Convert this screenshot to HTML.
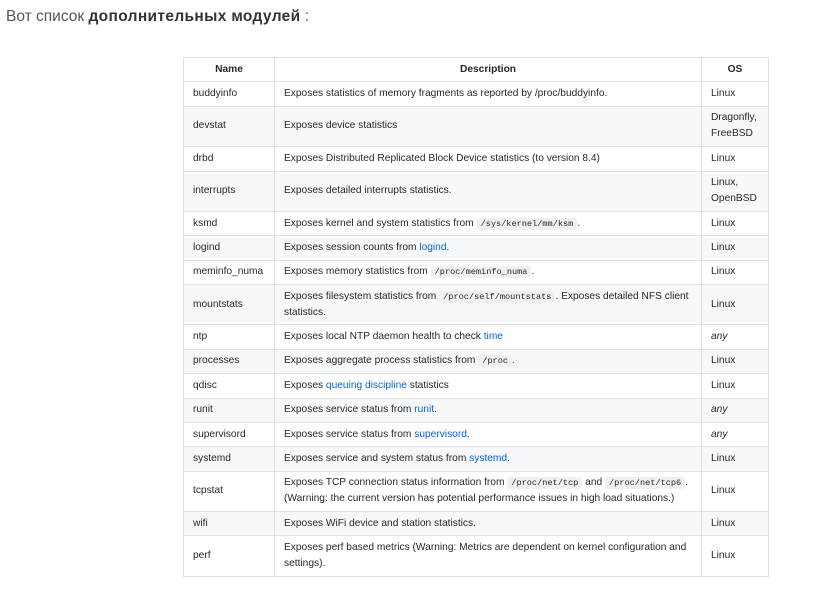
<!DOCTYPE html>
<html><head><meta charset="utf-8"><style>
html,body{margin:0;padding:0;background:#fff;width:813px;height:589px;overflow:hidden}
body{font-family:"Liberation Sans","DejaVu Sans",sans-serif;color:#24292e}
.t{position:absolute;left:6px;top:8px;font-size:15.5px;color:#555}
.t b{color:#333;letter-spacing:0.35px}
table{position:absolute;left:183px;top:57px;border-collapse:collapse;font-size:10.2px;width:585px;table-layout:fixed}
td,th{border:1px solid #dfe2e5;padding:3.7px 9px;line-height:16px;vertical-align:middle;text-align:left}
th{text-align:center;font-weight:bold}
tr:nth-child(2n+1) td{background:#f6f8fa}
code{font-family:"Liberation Mono","DejaVu Sans Mono",monospace;font-size:8.6px;background:#eef0f2;padding:1px 4px;border-radius:3px;line-height:10px}
a{color:#0366d6;text-decoration:none}
i{font-style:italic}
</style></head><body>
<div class="t">Вот список <b>дополнительных модулей</b> :</div>
<table>
<colgroup><col style="width:91px"><col style="width:427px"><col style="width:67px"></colgroup>
<tr><th>Name</th><th>Description</th><th>OS</th></tr>
<tr><td>buddyinfo</td><td>Exposes statistics of memory fragments as reported by /proc/buddyinfo.</td><td>Linux</td></tr>
<tr><td>devstat</td><td>Exposes device statistics</td><td>Dragonfly,<br>FreeBSD</td></tr>
<tr><td>drbd</td><td>Exposes Distributed Replicated Block Device statistics (to version 8.4)</td><td>Linux</td></tr>
<tr><td>interrupts</td><td>Exposes detailed interrupts statistics.</td><td>Linux,<br>OpenBSD</td></tr>
<tr><td>ksmd</td><td>Exposes kernel and system statistics from <code>/sys/kernel/mm/ksm</code>.</td><td>Linux</td></tr>
<tr><td>logind</td><td>Exposes session counts from <a>logind</a>.</td><td>Linux</td></tr>
<tr><td>meminfo_numa</td><td>Exposes memory statistics from <code>/proc/meminfo_numa</code>.</td><td>Linux</td></tr>
<tr><td>mountstats</td><td>Exposes filesystem statistics from <code>/proc/self/mountstats</code>. Exposes detailed NFS client statistics.</td><td>Linux</td></tr>
<tr><td>ntp</td><td>Exposes local NTP daemon health to check <a>time</a></td><td><i>any</i></td></tr>
<tr><td>processes</td><td>Exposes aggregate process statistics from <code>/proc</code>.</td><td>Linux</td></tr>
<tr><td>qdisc</td><td>Exposes <a>queuing discipline</a> statistics</td><td>Linux</td></tr>
<tr><td>runit</td><td>Exposes service status from <a>runit</a>.</td><td><i>any</i></td></tr>
<tr><td>supervisord</td><td>Exposes service status from <a>supervisord</a>.</td><td><i>any</i></td></tr>
<tr><td>systemd</td><td>Exposes service and system status from <a>systemd</a>.</td><td>Linux</td></tr>
<tr><td>tcpstat</td><td>Exposes TCP connection status information from <code>/proc/net/tcp</code> and <code>/proc/net/tcp6</code>.<br>(Warning: the current version has potential performance issues in high load situations.)</td><td>Linux</td></tr>
<tr><td>wifi</td><td>Exposes WiFi device and station statistics.</td><td>Linux</td></tr>
<tr><td>perf</td><td>Exposes perf based metrics (Warning: Metrics are dependent on kernel configuration and settings).</td><td>Linux</td></tr>
</table>
</body></html>
